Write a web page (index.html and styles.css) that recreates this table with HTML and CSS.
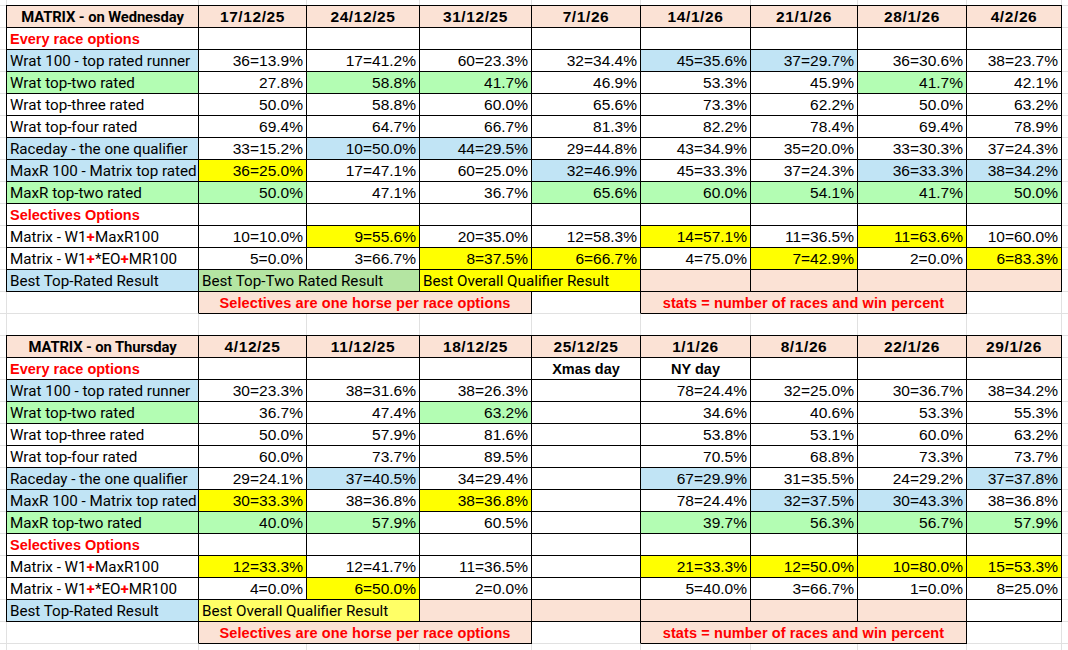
FILE: index.html
```html
<!DOCTYPE html>
<html lang="en">
<head>
<meta charset="utf-8">
<title>MATRIX results</title>
<link rel="stylesheet" href="styles.css">
</head>
<body>
<div class="sheet">
  <div class="tbl">
    <div class="h a ht">MATRIX - on Wednesday</div>
    <div class="h">17/12/25</div><div class="h">24/12/25</div><div class="h">31/12/25</div><div class="h">7/1/26</div><div class="h">14/1/26</div><div class="h">21/1/26</div><div class="h">28/1/26</div><div class="h">4/2/26</div>

    <div class="a sec">Every race options</div>
    <div></div><div></div><div></div><div></div><div></div><div></div><div></div><div></div>

    <div class="a blue">Wrat 100 - top rated runner</div>
    <div class="n">36=13.9%</div><div class="n">17=41.2%</div><div class="n">60=23.3%</div><div class="n">32=34.4%</div><div class="n blue">45=35.6%</div><div class="n blue">37=29.7%</div><div class="n">36=30.6%</div><div class="n">38=23.7%</div>

    <div class="a green">Wrat top-two rated</div>
    <div class="n">27.8%</div><div class="n green">58.8%</div><div class="n green">41.7%</div><div class="n">46.9%</div><div class="n">53.3%</div><div class="n">45.9%</div><div class="n green">41.7%</div><div class="n">42.1%</div>

    <div class="a">Wrat top-three rated</div>
    <div class="n">50.0%</div><div class="n">58.8%</div><div class="n">60.0%</div><div class="n">65.6%</div><div class="n">73.3%</div><div class="n">62.2%</div><div class="n">50.0%</div><div class="n">63.2%</div>

    <div class="a">Wrat top-four rated</div>
    <div class="n">69.4%</div><div class="n">64.7%</div><div class="n">66.7%</div><div class="n">81.3%</div><div class="n">82.2%</div><div class="n">78.4%</div><div class="n">69.4%</div><div class="n">78.9%</div>

    <div class="a blue">Raceday - the one qualifier</div>
    <div class="n">33=15.2%</div><div class="n blue">10=50.0%</div><div class="n blue">44=29.5%</div><div class="n">29=44.8%</div><div class="n">43=34.9%</div><div class="n">35=20.0%</div><div class="n">33=30.3%</div><div class="n">37=24.3%</div>

    <div class="a blue">MaxR 100 - Matrix top rated</div>
    <div class="n yel">36=25.0%</div><div class="n">17=47.1%</div><div class="n">60=25.0%</div><div class="n blue">32=46.9%</div><div class="n">45=33.3%</div><div class="n">37=24.3%</div><div class="n blue">36=33.3%</div><div class="n blue">38=34.2%</div>

    <div class="a green">MaxR top-two rated</div>
    <div class="n green">50.0%</div><div class="n">47.1%</div><div class="n">36.7%</div><div class="n green">65.6%</div><div class="n green">60.0%</div><div class="n green">54.1%</div><div class="n green">41.7%</div><div class="n green">50.0%</div>

    <div class="a sec">Selectives Options</div>
    <div></div><div></div><div></div><div></div><div></div><div></div><div></div><div></div>

    <div class="a">Matrix - W1<span class="plus">+</span>MaxR100</div>
    <div class="n">10=10.0%</div><div class="n yel">9=55.6%</div><div class="n">20=35.0%</div><div class="n">12=58.3%</div><div class="n yel">14=57.1%</div><div class="n">11=36.5%</div><div class="n yel">11=63.6%</div><div class="n">10=60.0%</div>

    <div class="a">Matrix - W1<span class="plus">+</span>*EO<span class="plus">+</span>MR100</div>
    <div class="n">5=0.0%</div><div class="n">3=66.7%</div><div class="n yel">8=37.5%</div><div class="n yel">6=66.7%</div><div class="n">4=75.0%</div><div class="n yel">7=42.9%</div><div class="n">2=0.0%</div><div class="n yel">6=83.3%</div>

    <div class="a blue">Best Top-Rated Result</div>
    <div class="t s2 dgreen">Best Top-Two Rated Result</div>
    <div class="t s2 yel">Best Overall Qualifier Result</div>
    <div class="sal"></div><div class="sal"></div><div class="sal"></div><div class="sal"></div>

    <div class="a off-a"></div>
    <div class="s3 sal note">Selectives are one horse per race options</div>
    <div class="off-b"></div>
    <div class="s3 sal note">stats = number of races and win percent</div>
    <div class="off-r"></div>
  </div>

  <div class="tbl">
    <div class="h a ht">MATRIX - on Thursday</div>
    <div class="h">4/12/25</div><div class="h">11/12/25</div><div class="h">18/12/25</div><div class="h">25/12/25</div><div class="h">1/1/26</div><div class="h">8/1/26</div><div class="h">22/1/26</div><div class="h">29/1/26</div>

    <div class="a sec">Every race options</div>
    <div></div><div></div><div></div><div class="day">Xmas day</div><div class="day">NY day</div><div></div><div></div><div></div>

    <div class="a blue">Wrat 100 - top rated runner</div>
    <div class="n">30=23.3%</div><div class="n">38=31.6%</div><div class="n">38=26.3%</div><div></div><div class="n">78=24.4%</div><div class="n">32=25.0%</div><div class="n">30=36.7%</div><div class="n">38=34.2%</div>

    <div class="a green">Wrat top-two rated</div>
    <div class="n">36.7%</div><div class="n">47.4%</div><div class="n green">63.2%</div><div></div><div class="n">34.6%</div><div class="n">40.6%</div><div class="n">53.3%</div><div class="n">55.3%</div>

    <div class="a">Wrat top-three rated</div>
    <div class="n">50.0%</div><div class="n">57.9%</div><div class="n">81.6%</div><div></div><div class="n">53.8%</div><div class="n">53.1%</div><div class="n">60.0%</div><div class="n">63.2%</div>

    <div class="a">Wrat top-four rated</div>
    <div class="n">60.0%</div><div class="n">73.7%</div><div class="n">89.5%</div><div></div><div class="n">70.5%</div><div class="n">68.8%</div><div class="n">73.3%</div><div class="n">73.7%</div>

    <div class="a blue">Raceday - the one qualifier</div>
    <div class="n">29=24.1%</div><div class="n blue">37=40.5%</div><div class="n">34=29.4%</div><div></div><div class="n blue">67=29.9%</div><div class="n">31=35.5%</div><div class="n">24=29.2%</div><div class="n blue">37=37.8%</div>

    <div class="a blue">MaxR 100 - Matrix top rated</div>
    <div class="n yel">30=33.3%</div><div class="n">38=36.8%</div><div class="n yel">38=36.8%</div><div></div><div class="n">78=24.4%</div><div class="n blue">32=37.5%</div><div class="n blue">30=43.3%</div><div class="n">38=36.8%</div>

    <div class="a green">MaxR top-two rated</div>
    <div class="n green">40.0%</div><div class="n green">57.9%</div><div class="n">60.5%</div><div></div><div class="n green">39.7%</div><div class="n green">56.3%</div><div class="n green">56.7%</div><div class="n green">57.9%</div>

    <div class="a sec">Selectives Options</div>
    <div></div><div></div><div></div><div></div><div></div><div></div><div></div><div></div>

    <div class="a">Matrix - W1<span class="plus">+</span>MaxR100</div>
    <div class="n yel">12=33.3%</div><div class="n">12=41.7%</div><div class="n">11=36.5%</div><div></div><div class="n yel">21=33.3%</div><div class="n yel">12=50.0%</div><div class="n yel">10=80.0%</div><div class="n yel">15=53.3%</div>

    <div class="a">Matrix - W1<span class="plus">+</span>*EO<span class="plus">+</span>MR100</div>
    <div class="n">4=0.0%</div><div class="n yel">6=50.0%</div><div class="n">2=0.0%</div><div></div><div class="n">5=40.0%</div><div class="n">3=66.7%</div><div class="n">1=0.0%</div><div class="n">8=25.0%</div>

    <div class="a blue">Best Top-Rated Result</div>
    <div class="t s2 lyel">Best Overall Qualifier Result</div>
    <div class="sal"></div><div class="sal"></div><div class="sal"></div><div class="sal"></div><div class="sal"></div><div></div>

    <div class="a off-a"></div>
    <div class="s3 sal note">Selectives are one horse per race options</div>
    <div class="off-b"></div>
    <div class="s3 sal note">stats = number of races and win percent</div>
    <div class="off-r"></div>
  </div>
</div>
</body>
</html>
```

FILE: styles.css
```css
html, body {
  margin: 0;
  padding: 0;
}

body {
  width: 1068px;
  height: 650px;
  overflow: hidden;
  background-color: #ffffff;
  background-image:
    linear-gradient(90deg,
      transparent 6px, #e1e1e1 6px 7px,
      transparent 7px 198px, #e1e1e1 198px 199px,
      transparent 199px 306px, #e1e1e1 306px 307px,
      transparent 307px 419px, #e1e1e1 419px 420px,
      transparent 420px 531px, #e1e1e1 531px 532px,
      transparent 532px 640px, #e1e1e1 640px 641px,
      transparent 641px 750px, #e1e1e1 750px 751px,
      transparent 751px 857px, #e1e1e1 857px 858px,
      transparent 858px 966px, #e1e1e1 966px 967px,
      transparent 967px 1061px, #e1e1e1 1061px 1062px,
      transparent 1062px),
    linear-gradient(180deg, #e1e1e1 0 1px, transparent 1px);
  background-size: 100% 100%, 100% 22px;
  background-position: 0 0, 0 5px;
  background-repeat: no-repeat, repeat;
  font-family: Roboto, "Liberation Sans", sans-serif;
  color: #000;
}

.sheet {
  padding: 5px 0 0 6px;
}

.tbl {
  display: grid;
  grid-template-columns: 193px 108px 113px 112px 109px 110px 107px 109px 95px;
  grid-template-rows: 23px repeat(13, 22px);
  font-size: 15.2px;
}

.tbl + .tbl {
  margin-top: 21px;
}

.tbl > div {
  box-sizing: border-box;
  border-right: 1px solid #000;
  border-bottom: 1px solid #000;
  white-space: nowrap;
  overflow: hidden;
  line-height: 20px;
  padding: 1px 3px 0;
}

.h {
  border-top: 1px solid #000;
  background: #fbe2d5;
  text-align: center;
  font-family: "Liberation Sans", Arial, sans-serif;
  font-size: 15.5px;
  font-weight: bold;
  letter-spacing: 0.6px;
}

.h.ht {
  font-family: Roboto, "Liberation Sans", sans-serif;
  font-size: 14.8px;
  letter-spacing: -0.1px;
}

.a {
  border-left: 1px solid #000;
  padding-left: 4px;
}

.n {
  font-family: "Liberation Sans", Arial, sans-serif;
  font-size: 15.5px;
  text-align: right;
}

.t {
  padding-left: 4px;
}

.sec,
.note {
  font-family: "Liberation Sans", Arial, sans-serif;
  font-weight: bold;
  color: #ff0000;
  font-size: 14.5px;
}

.note {
  text-align: center;
  letter-spacing: 0.1px;
}

.day {
  font-family: "Liberation Sans", Arial, sans-serif;
  font-weight: bold;
  font-size: 14.5px;
  text-align: center;
}

.plus {
  color: #ff0000;
  font-weight: bold;
}

.s2 { grid-column: span 2; }
.s3 { grid-column: span 3; }

.blue { background: #c1e4f5; }
.green { background: #b3fdb3; }
.dgreen { background: #b4e5a2; }
.yel { background: #ffff00; }
.lyel { background: #ffff66; }
.sal { background: #fbe2d5; }

.tbl > .off-a {
  border-left-color: transparent;
  border-bottom-color: transparent;
}

.tbl > .off-b {
  border-bottom-color: transparent;
}

.tbl > .off-r {
  border-right-color: transparent;
  border-bottom-color: transparent;
}
```
